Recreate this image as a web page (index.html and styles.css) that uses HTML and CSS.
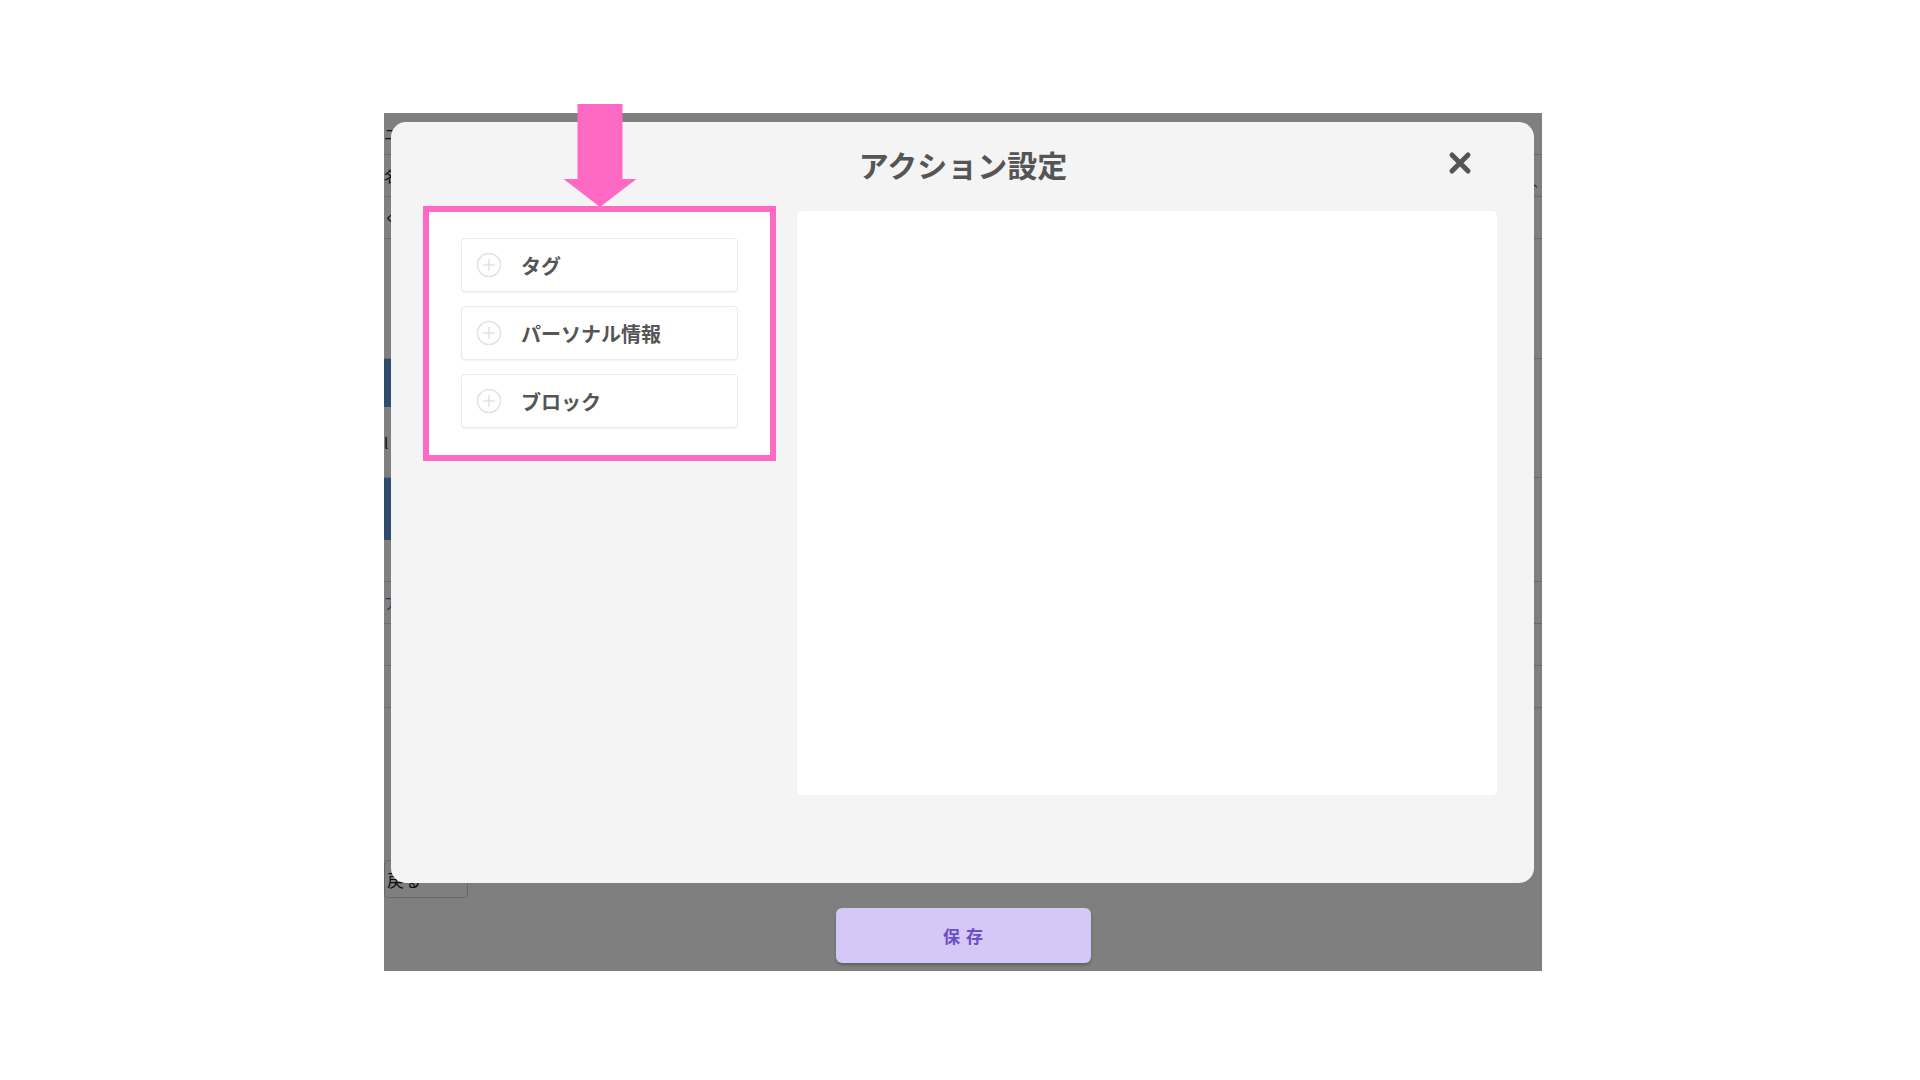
FILE: index.html
```html
<!DOCTYPE html>
<html lang="ja">

<head>
  <meta charset="utf-8">
  <title>アクション設定</title>
  <link rel="stylesheet" href="styles.css">
</head>

<body>
  <div class="screen">
    <!-- page behind the dialog -->
    <div class="page">
      <div class="p-row">ニックネーム<span class="p-caret">⌃</span></div>
      <div class="p-row">名前</div>
      <div class="p-row">くわしく</div>
      <div class="p-row tall"></div>
      <div class="p-bar"></div>
      <div class="p-row mid">l</div>
      <div class="p-bar big"></div>
      <div class="p-row"></div>
      <div class="p-row link">ア</div>
      <div class="p-row"></div>
      <div class="p-row"></div>
      <div class="p-back">戻る</div>
    </div>
    <div class="overlay"></div>

    <div class="dialog-layer">
      <div class="modal">
        <div class="modal-head">
          <span></span>
          <h2 class="modal-title">アクション設定</h2>
          <button class="close-btn" aria-label="close">
            <svg width="24" height="24" viewBox="0 0 24 24">
              <path d="M4 4 L20 20 M20 4 L4 20" stroke="#555" stroke-width="5" stroke-linecap="round" fill="none"/>
            </svg>
          </button>
        </div>
        <div class="modal-body">
          <div class="action-list">
            <svg class="pointer" width="73" height="103" viewBox="0 0 73 103">
              <rect x="14" y="0" width="45" height="76" fill="#fe69c3"/>
              <polygon points="0,75 73,75 36.5,103" fill="#fe69c3"/>
            </svg>
            <div class="action-item">
              <svg class="plus" width="26" height="26" viewBox="0 0 26 26">
                <circle cx="13" cy="13" r="11.5" stroke="#e3e3e3" stroke-width="1.6" fill="none"/>
                <path d="M13 7 V19 M7 13 H19" stroke="#e3e3e3" stroke-width="1.6"/>
              </svg>
              <span>タグ</span>
            </div>
            <div class="action-item">
              <svg class="plus" width="26" height="26" viewBox="0 0 26 26">
                <circle cx="13" cy="13" r="11.5" stroke="#e3e3e3" stroke-width="1.6" fill="none"/>
                <path d="M13 7 V19 M7 13 H19" stroke="#e3e3e3" stroke-width="1.6"/>
              </svg>
              <span>パーソナル情報</span>
            </div>
            <div class="action-item">
              <svg class="plus" width="26" height="26" viewBox="0 0 26 26">
                <circle cx="13" cy="13" r="11.5" stroke="#e3e3e3" stroke-width="1.6" fill="none"/>
                <path d="M13 7 V19 M7 13 H19" stroke="#e3e3e3" stroke-width="1.6"/>
              </svg>
              <span>ブロック</span>
            </div>
          </div>
          <div class="action-panel"></div>
        </div>
      </div>
      <button class="save-btn">保存</button>
    </div>
  </div>
</body>

</html>
```

FILE: styles.css
```css
/* Variables */
:root {
  --pink: #fe69c3;
  --text: #555555;
  --modal: #f4f4f4;
}

/* Boiler Plate */
*, ::after, ::before {
  box-sizing: border-box;
  margin: 0;
  padding: 0;
}
html {
  font-family: "Noto Sans CJK JP", "Noto Sans", sans-serif;
  background: #ffffff;
}
body {
  width: 1920px;
  height: 1080px;
  padding: 113px 0 0 384px;
}

/* Page behind */
.screen {
  position: relative;
  width: 1158px;
  height: 858px;
  background: #ffffff;
}
.page {
  height: 100%;
  overflow: hidden;
  display: flex;
  flex-direction: column;
  color: #222;
  font-size: 15px;
}
.p-row {
  height: 42px;
  border-bottom: 1px solid #d6d6d6;
  display: flex;
  align-items: center;
  justify-content: space-between;
  padding-right: 2px;
}
.p-row.tall { height: 120px; }
.p-row.mid { height: 71px; }
.p-row.link { color: #3c6fd0; }
.p-caret {
  color: #3b4f6b;
  font-size: 13px;
  margin-top: 110px;
}
.p-bar {
  width: 220px;
  height: 48px;
  background: #5e96da;
}
.p-bar.big { height: 62px; }
.p-back {
  width: 84px;
  height: 38px;
  margin-top: 152px;
  border: 1px solid #d0d0d0;
  border-radius: 4px;
  display: flex;
  align-items: center;
  padding-left: 2px;
  font-size: 17px;
}
.overlay {
  position: absolute;
  inset: 0;
  background: rgba(0, 0, 0, 0.5);
}

/* Dialog */
.dialog-layer {
  position: absolute;
  inset: 0;
  display: flex;
  flex-direction: column;
  align-items: center;
  padding-top: 9px;
  gap: 25px;
}
.modal {
  width: 1143px;
  height: 761px;
  margin-left: -1px;
  background: var(--modal);
  border-radius: 15px;
  padding: 0 37px 0 38px;
}
.modal-head {
  height: 90px;
  display: grid;
  grid-template-columns: 1fr auto 1fr;
  align-items: start;
}
.modal-title {
  margin-top: 24px;
  font-size: 30px;
  line-height: 36px;
  font-weight: 700;
  color: var(--text);
}
.close-btn {
  justify-self: end;
  margin: 29px 25px 0 0;
  width: 24px;
  height: 24px;
  border: none;
  background: transparent;
  display: flex;
}
.modal-body {
  display: flex;
  align-items: flex-start;
  gap: 27px;
}

/* Left list */
.action-list {
  position: relative;
  width: 341px;
  background: #ffffff;
  outline: 6px solid var(--pink);
  padding: 26px 32px 27px;
  display: flex;
  flex-direction: column;
  gap: 14px;
}
.pointer {
  position: absolute;
  left: 50%;
  bottom: calc(100% + 5px);
  transform: translateX(-50%);
}
.action-item {
  height: 54px;
  background: #ffffff;
  border: 1px solid #ebebeb;
  border-radius: 4px;
  box-shadow: 0 1px 2px rgba(0, 0, 0, 0.05);
  display: flex;
  align-items: center;
  gap: 19px;
  padding-left: 14px;
  font-size: 20px;
  font-weight: 700;
  color: var(--text);
}

/* Right panel */
.action-panel {
  width: 700px;
  height: 584px;
  margin-top: -1px;
  background: #ffffff;
  border-radius: 5px;
}

/* Save */
.save-btn {
  width: 255px;
  height: 55px;
  border: none;
  border-radius: 6px;
  background: #d5c7f6;
  color: #6b4ec6;
  font-family: inherit;
  font-size: 17px;
  font-weight: 700;
  letter-spacing: 6px;
  text-indent: 6px;
  box-shadow: 0 2px 3px rgba(0, 0, 0, 0.25);
}
```
